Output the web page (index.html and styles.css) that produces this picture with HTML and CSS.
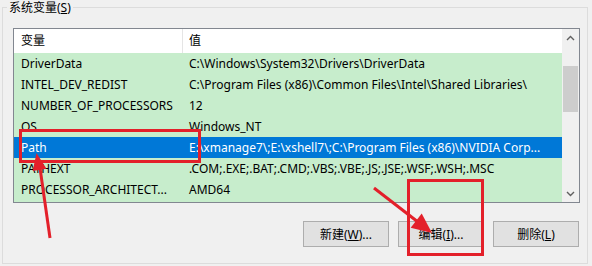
FILE: index.html
```html
<html>

<head>
  <link rel="stylesheet" href="styles.css">
</head>

<body>
  <div class="page">
    <div class="group">
      <div class="group-title">系统变量(<u>S</u>)</div>
      <div class="list">
        <div class="list-main">
          <div class="list-head">
            <div class="col-name">变量</div>
            <div class="col-value">值</div>
          </div>
          <div class="list-body">
            <div class="row">
              <div class="col-name">DriverData</div>
              <div class="col-value">C:\Windows\System32\Drivers\DriverData</div>
            </div>
            <div class="row">
              <div class="col-name">INTEL_DEV_REDIST</div>
              <div class="col-value">C:\Program Files (x86)\Common Files\Intel\Shared Libraries\</div>
            </div>
            <div class="row">
              <div class="col-name">NUMBER_OF_PROCESSORS</div>
              <div class="col-value">12</div>
            </div>
            <div class="row">
              <div class="col-name">OS</div>
              <div class="col-value">Windows_NT</div>
            </div>
            <div class="row selected">
              <div class="col-name">Path</div>
              <div class="col-value">E:\xmanage7\;E:\xshell7\;C:\Program Files (x86)\NVIDIA Corp...</div>
            </div>
            <div class="row">
              <div class="col-name">PATHEXT</div>
              <div class="col-value">.COM;.EXE;.BAT;.CMD;.VBS;.VBE;.JS;.JSE;.WSF;.WSH;.MSC</div>
            </div>
            <div class="row">
              <div class="col-name">PROCESSOR_ARCHITECT...</div>
              <div class="col-value">AMD64</div>
            </div>
          </div>
        </div>
        <div class="scrollbar">
          <div class="sb-arrow">
            <svg width="9" height="6" viewBox="0 0 9 6"><path d="M1 5 L4.5 1.5 L8 5" fill="none" stroke="#606060" stroke-width="1.4"/></svg>
          </div>
          <div class="sb-track">
            <div class="sb-thumb"></div>
          </div>
          <div class="sb-arrow">
            <svg width="9" height="6" viewBox="0 0 9 6"><path d="M1 1 L4.5 4.5 L8 1" fill="none" stroke="#606060" stroke-width="1.4"/></svg>
          </div>
        </div>
      </div>
      <div class="buttons">
        <button>新建(<u>W</u>)...</button>
        <button>编辑(<u>I</u>)...</button>
        <button>删除(<u>L</u>)</button>
      </div>
    </div>

    <!-- red annotations drawn on top of the dialog -->
    <svg class="marks" width="592" height="266" viewBox="0 0 592 266">
      <g fill="none" stroke="#e3202a" stroke-width="3">
        <rect x="20.5" y="130.5" width="179" height="31" />
        <rect x="408.5" y="180.5" width="74" height="74" />
        <line x1="50" y1="238" x2="40" y2="168" />
        <line x1="374" y1="188" x2="418" y2="222" />
      </g>
      <g fill="#e3202a">
        <polygon points="36.5,153 46.5,168.7 32.7,170.9" />
        <polygon points="432,233 410.7,227.8 421.7,213.6" />
      </g>
    </svg>
  </div>
</body>

</html>
```

FILE: styles.css
```css
body {
  margin: 0;
  background-color: #f0f0f0;
  font-family: "Noto Sans", "Noto Sans CJK SC", sans-serif;
  font-size: 12px;
  color: #000;
}

.page {
  position: relative;
  width: 592px;
  height: 266px;
  overflow: hidden;
}

.group {
  position: relative;
  box-sizing: border-box;
  height: 257px;
  margin: 7px 4px 0 2px;
  padding: 20px 7px 0 10px;
  border: 1px solid #dcdcdc;
}

.group-title {
  position: absolute;
  top: -7px;
  left: 4px;
  padding: 0 2px;
  line-height: 14px;
  background-color: #f0f0f0;
}

.list {
  display: flex;
  box-sizing: border-box;
  height: 175px;
  border: 1px solid #828790;
}

.list-main {
  flex: 1;
  display: flex;
  flex-direction: column;
  overflow: hidden;
}

.list-head {
  display: flex;
  height: 24px;
  line-height: 24px;
  background-color: #fff;
}

.list-head .col-name {
  border-right: 1px solid #e5e5e5;
}

.list-body {
  flex: 1;
  background-color: #c7edcc;
}

.row {
  display: flex;
  height: 21px;
  line-height: 21px;
}

.row.selected {
  background-color: #0078d7;
  color: #fff;
}

.col-name {
  box-sizing: border-box;
  width: 169px;
  flex-shrink: 0;
  padding-left: 7px;
  white-space: nowrap;
  overflow: hidden;
}

.col-value {
  flex: 1;
  padding-left: 6px;
  white-space: nowrap;
  overflow: hidden;
}

.scrollbar {
  display: flex;
  flex-direction: column;
  width: 17px;
  background-color: #f0f0f0;
}

.sb-arrow {
  display: flex;
  height: 17px;
  align-items: center;
  justify-content: center;
}

.sb-track {
  flex: 1;
}

.sb-thumb {
  height: 46px;
  margin: 20px 1px 0 1px;
  background-color: #cdcdcd;
}

.buttons {
  display: flex;
  justify-content: flex-end;
  gap: 9px;
  margin-top: 18px;
  padding-right: 1px;
}

button {
  width: 86px;
  height: 26px;
  padding: 0;
  border: 1px solid #adadad;
  background-color: #e1e1e1;
  font-family: inherit;
  font-size: 12px;
  color: #000;
}

.marks {
  position: absolute;
  top: 0;
  left: 0;
}
```
